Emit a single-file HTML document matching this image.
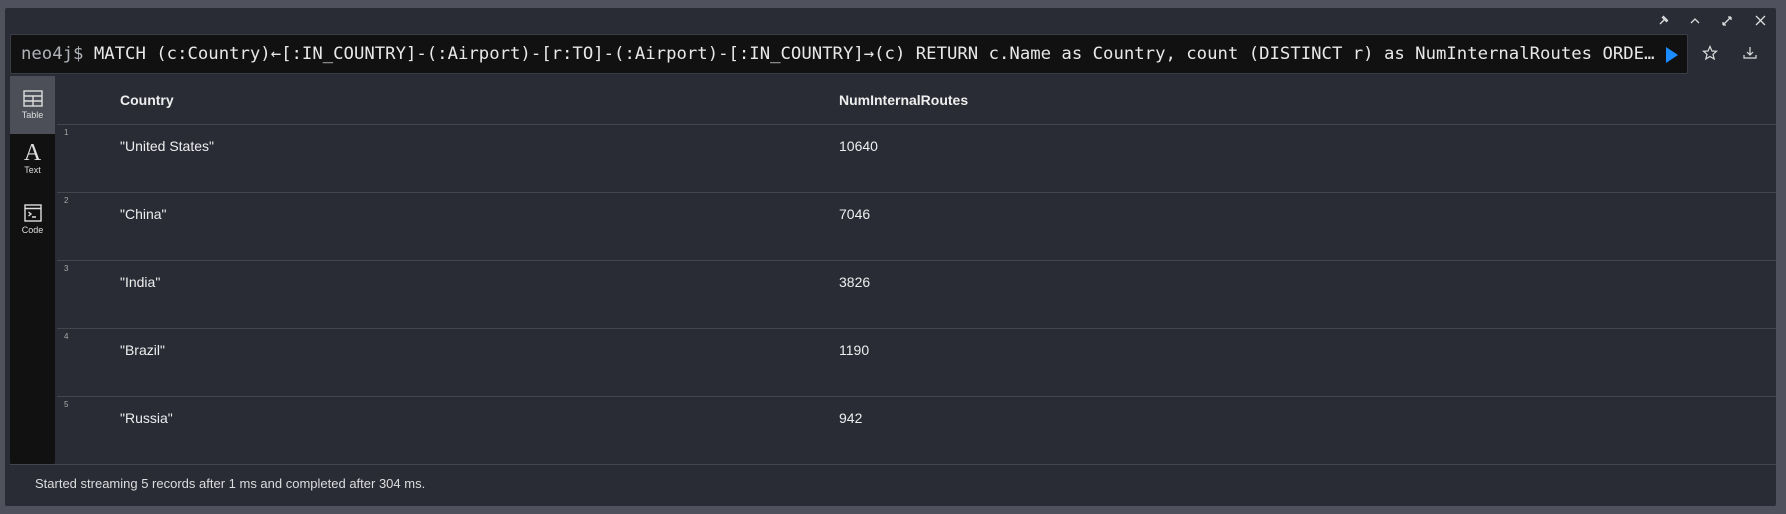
<!DOCTYPE html>
<html><head><style>
*{margin:0;padding:0;box-sizing:border-box}
body{width:1786px;height:514px;background:#4f525d;font-family:"Liberation Sans",sans-serif;overflow:hidden;position:relative}
.card{position:absolute;left:5px;top:8px;width:1771px;height:498px;background:#292c35;border-radius:2px}
.ed{position:absolute;left:10px;top:34px;width:1678px;height:40px;background:#111;border:1px solid #3a3d46;border-radius:2px}
.q{position:absolute;left:10px;top:9px;width:1635px;font-family:"DejaVu Sans Mono","Liberation Mono",monospace;font-size:17.3px;color:#e8e8e8;white-space:nowrap;overflow:hidden;text-overflow:ellipsis}
.q span{color:#b0b4ba}
.side{position:absolute;left:10px;top:76px;width:45px;height:388px;background:#111;border-radius:0 0 2px 2px}
.tab{position:absolute;left:0;width:45px;height:58px;text-align:center;color:#ddd;font-size:9px}
.hdr,.cell{position:absolute;color:#eee;font-size:14px}
.hdr{font-weight:bold;top:92px}
.line{position:absolute;left:57px;width:1719px;height:1px;background:#44464f}
.num{position:absolute;left:64px;font-size:8px;color:#aaa}
.ico{position:absolute}
</style></head><body>
<div class="card"></div>
<svg class="ico" style="left:1655px;top:13px" width="100" height="16" viewBox="0 0 100 16" fill="none" stroke="#ddd" stroke-width="1.3">
<path d="M5 11 L9 7 M7 4 L12 9 M8 3 L13 8 M9 6 L11 8"/>
<path d="M36 10 L40 6 L44 10"/>
<path d="M68 12 L76 4 M68 12 L68 9 M68 12 L71 12 M76 4 L73 4 M76 4 L76 7"/>
</svg>
<svg class="ico" style="left:1754px;top:13px" width="14" height="16" viewBox="0 0 14 16" fill="none" stroke="#ddd" stroke-width="1.3"><path d="M2 3 L11 12 M11 3 L2 12"/></svg>
<div class="ed"><div class="q"><span>neo4j$</span> MATCH (c:Country)←[:IN_COUNTRY]-(:Airport)-[r:TO]-(:Airport)-[:IN_COUNTRY]→(c) RETURN c.Name as Country, count (DISTINCT r) as NumInternalRoutes ORDER BY NumInternalRoutes DESC LIMIT 5</div>
<svg style="position:absolute;left:1654px;top:11px" width="14" height="18" viewBox="0 0 14 18"><path d="M1 1 L13 9 L1 17Z" fill="#1a8cff"/></svg></div>
<svg class="ico" style="left:1702px;top:45px" width="16" height="16" viewBox="0 0 16 16" fill="none" stroke="#ddd" stroke-width="1.2"><path d="M8 1.5 L10 6 L14.5 6.3 L11 9.3 L12.2 14 L8 11.5 L3.8 14 L5 9.3 L1.5 6.3 L6 6Z"/></svg>
<svg class="ico" style="left:1742px;top:45px" width="16" height="16" viewBox="0 0 16 16" fill="none" stroke="#ddd" stroke-width="1.2"><path d="M8 2 V10 M5 7 L8 10 L11 7 M2 10 V13 H14 V10"/></svg>
<div class="side">
<div class="tab" style="top:0;background:#4c4e58"><svg style="margin-top:14px" width="20" height="17" viewBox="0 0 20 17" fill="none" stroke="#ddd" stroke-width="1.4"><rect x="1" y="1" width="18" height="15"/><path d="M1 6 H19 M1 11 H19 M10 6 V16"/></svg><div style="margin-top:1px">Table</div></div>
<div class="tab" style="top:58px"><div style="font-family:'Liberation Serif',serif;font-size:24px;margin-top:7px;line-height:24px">A</div><div>Text</div></div>
<div class="tab" style="top:116px"><svg style="margin-top:12px" width="18" height="18" viewBox="0 0 18 18" fill="none" stroke="#ddd" stroke-width="1.4"><rect x="1" y="1" width="16" height="16"/><path d="M1 4.5 H17 M4.5 8 L7 10 L4.5 12 M8 13 H12"/></svg><div style="margin-top:1px">Code</div></div>
</div>
<div class="hdr" style="left:120px">Country</div>
<div class="hdr" style="left:839px">NumInternalRoutes</div>
<div class="line" style="top:124px"></div>
<div class="line" style="top:192px"></div>
<div class="line" style="top:260px"></div>
<div class="line" style="top:328px"></div>
<div class="line" style="top:396px"></div>
<div class="line" style="top:464px;left:10px;width:1766px"></div>
<div class="num" style="top:128px">1</div><div class="cell" style="left:120px;top:138px">"United States"</div><div class="cell" style="left:839px;top:138px">10640</div>
<div class="num" style="top:196px">2</div><div class="cell" style="left:120px;top:206px">"China"</div><div class="cell" style="left:839px;top:206px">7046</div>
<div class="num" style="top:264px">3</div><div class="cell" style="left:120px;top:274px">"India"</div><div class="cell" style="left:839px;top:274px">3826</div>
<div class="num" style="top:332px">4</div><div class="cell" style="left:120px;top:342px">"Brazil"</div><div class="cell" style="left:839px;top:342px">1190</div>
<div class="num" style="top:400px">5</div><div class="cell" style="left:120px;top:410px">"Russia"</div><div class="cell" style="left:839px;top:410px">942</div>
<div class="cell" style="left:35px;top:476px;font-size:13px;color:#ddd">Started streaming 5 records after 1 ms and completed after 304 ms.</div>
</body></html>
